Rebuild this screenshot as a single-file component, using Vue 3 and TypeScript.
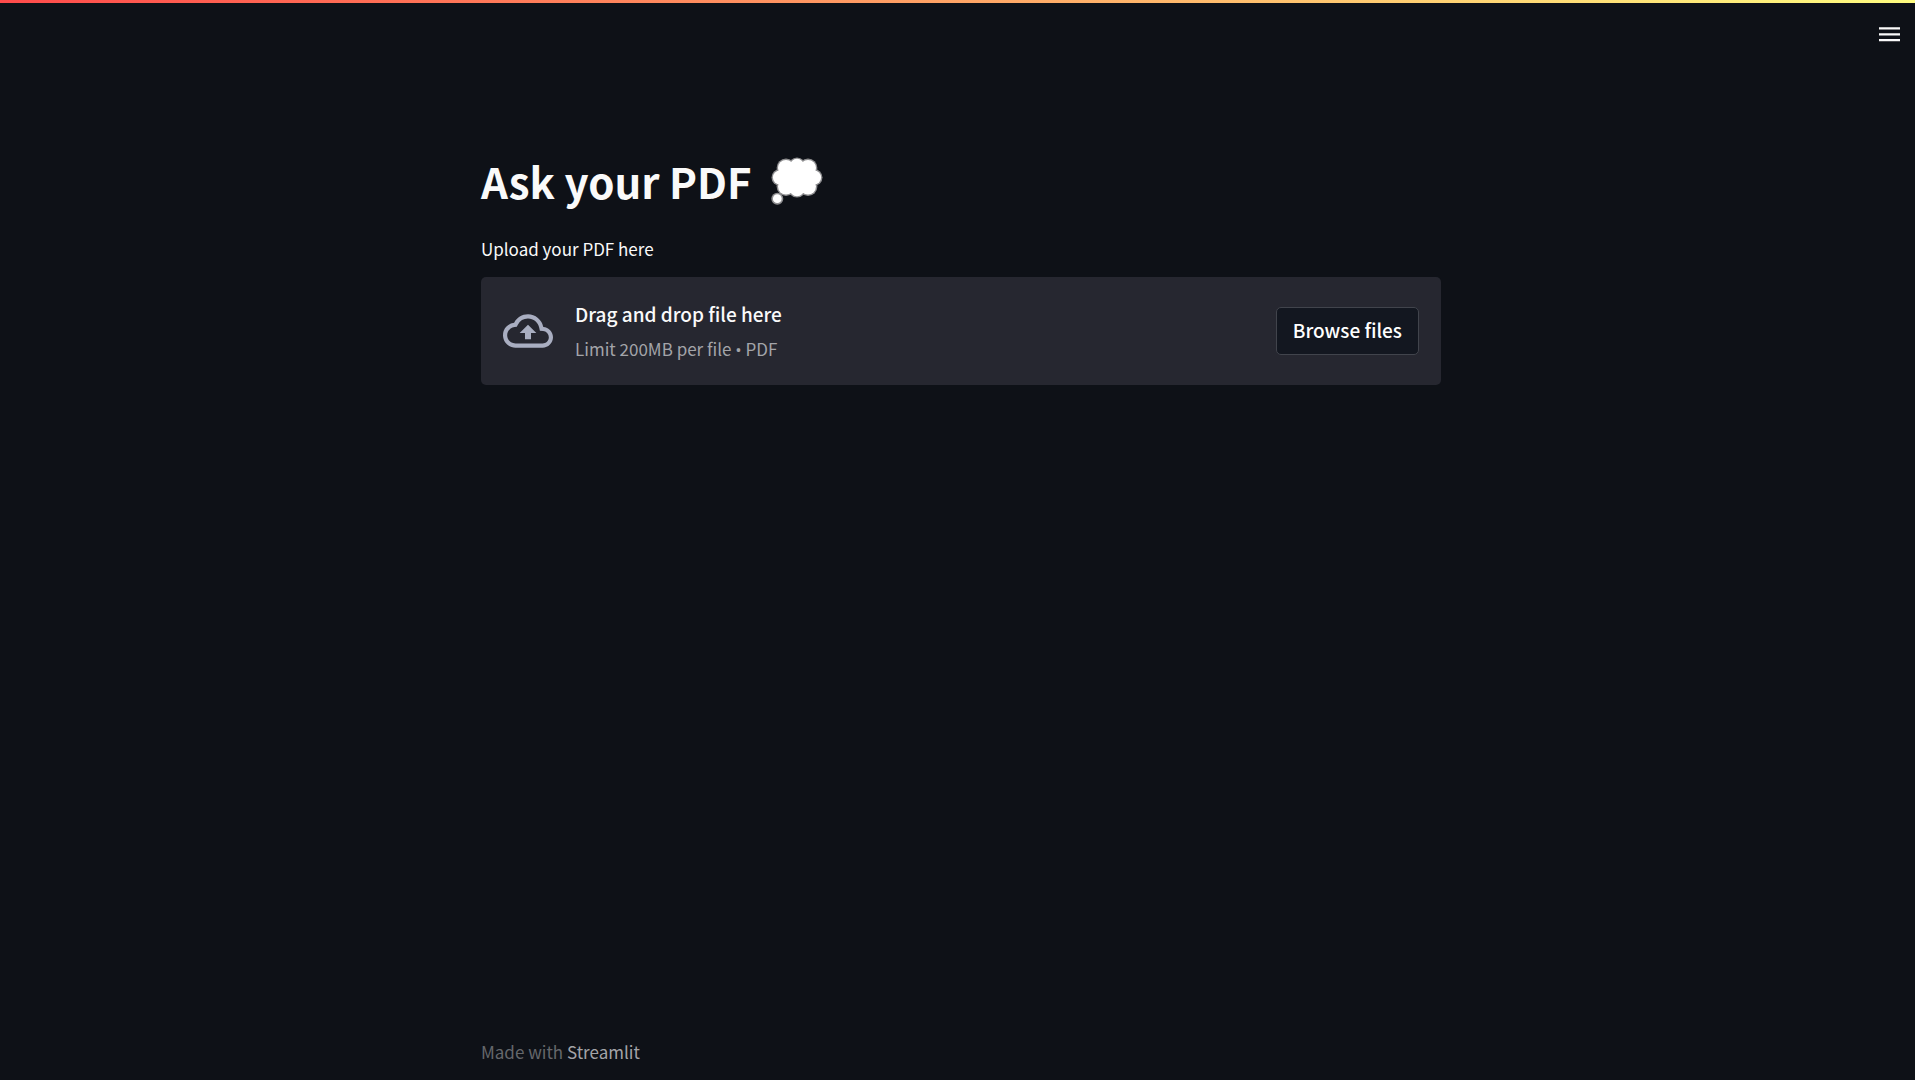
<script setup lang="ts">
import { ref } from 'vue'

interface Puff {
  x: number
  y: number
  r: number
}

const puffs: Puff[] = [
  { x: 26, y: 9, r: 8.6 },
  { x: 15, y: 11, r: 9.4 },
  { x: 37, y: 11, r: 9.4 },
  { x: 9, y: 20.5, r: 8.5 },
  { x: 43, y: 20.5, r: 8.5 },
  { x: 15, y: 29.5, r: 9.4 },
  { x: 37, y: 29.5, r: 9.4 },
  { x: 26, y: 31.8, r: 8.8 },
]

const picker = ref<HTMLInputElement | null>(null)
const openPicker = () => picker.value?.click()
</script>

<template>
  <div class="app">
    <header class="topbar">
      <button class="menu" type="button" aria-label="Main menu">
        <svg viewBox="0 0 21 15" fill="currentColor" aria-hidden="true">
          <path d="M0 .3h21v2.3H0zM0 6.2h21v2.3H0zM0 12h21v2.3H0z" />
        </svg>
      </button>
    </header>

    <div class="page">
      <main class="content">
        <h1 class="title">
          <span>Ask your PDF</span>
          <svg class="thought" viewBox="0 0 52 48" role="img" aria-label="Thought balloon">
            <g fill="#8e8e90">
              <circle v-for="(p, i) in puffs" :key="i" :cx="p.x" :cy="p.y" :r="p.r" />
              <circle cx="6.3" cy="41.7" r="6" />
            </g>
            <g fill="#ffffff">
              <circle v-for="(p, i) in puffs" :key="i" :cx="p.x" :cy="p.y" :r="p.r - 1.4" />
              <rect x="9" y="9" width="34" height="23" />
              <circle cx="6.3" cy="41.7" r="4.4" />
            </g>
          </svg>
        </h1>

        <label class="label" for="pdf-file">Upload your PDF here</label>
        <section class="dropzone">
          <svg class="cloud" viewBox="0 0 24 24" fill="currentColor" aria-hidden="true">
            <path
              d="M19.35 10.04A7.49 7.49 0 0 0 12 4C9.11 4 6.6 5.64 5.35 8.04A5.994 5.994 0 0 0 0 14c0 3.31 2.69 6 6 6h13c2.76 0 5-2.24 5-5 0-2.64-2.05-4.78-4.65-4.96zM19 18H6c-2.21 0-4-1.79-4-4 0-2.05 1.53-3.76 3.56-3.97l1.07-.11.5-.95A5.469 5.469 0 0 1 12 6c2.62 0 4.88 1.86 5.39 4.43l.3 1.5 1.53.11A2.98 2.98 0 0 1 22 15c0 1.65-1.35 3-3 3zM8 13h2.55v3h2.9v-3H16l-4-4z"
            />
          </svg>
          <div class="hints">
            <span class="primary">Drag and drop file here</span>
            <span class="secondary">Limit 200MB per file <span class="bullet">•</span> PDF</span>
          </div>
          <input id="pdf-file" ref="picker" type="file" accept=".pdf" hidden />
          <button class="browse" type="button" @click="openPicker">Browse files</button>
        </section>
      </main>

      <footer class="footer">Made with <a href="#">Streamlit</a></footer>
    </div>
  </div>
</template>

<style>
body {
  background: #0e1117;
}
</style>

<style scoped>
.app {
  display: flex;
  flex-direction: column;
  min-height: 100vh;
  background: #0e1117;
  color: #fafafa;
  font-family: "Noto Sans CJK SC", "Noto Sans", sans-serif;
  font-size: 17px;
  line-height: 24px;
}

.topbar {
  display: flex;
  justify-content: flex-end;
  align-items: flex-start;
  box-sizing: border-box;
  height: 64px;
  padding: 24px 11px 0 0;
  background: linear-gradient(90deg, #ff4b4b, #fffd80) top / 100% 3px no-repeat;
}

.menu {
  padding: 3px 4px;
  border: 0;
  background: none;
  color: #fafafa;
  cursor: pointer;
}

.menu svg {
  display: block;
  width: 21px;
  height: 15px;
}

.page {
  display: flex;
  flex: 1;
  flex-direction: column;
  align-items: center;
  padding-left: 7px;
}

.content,
.footer {
  width: 100%;
  max-width: 960px;
}

.content {
  flex: 1;
  padding-top: 87px;
}

.title {
  display: flex;
  align-items: center;
  gap: 19px;
  margin: 0 0 26px;
  font-size: 42px;
  font-weight: 700;
  line-height: 60px;
}

.thought {
  width: 52px;
  height: 48px;
}

.label {
  display: block;
  margin-bottom: 16px;
}

.dropzone {
  display: flex;
  align-items: center;
  gap: 22px;
  box-sizing: border-box;
  min-height: 108px;
  padding: 20px 22px;
  border-radius: 5px;
  background: #262730;
}

.cloud {
  flex: none;
  width: 50px;
  height: 50px;
  color: #a9aec1;
}

.hints {
  display: flex;
  flex: 1;
  flex-direction: column;
  gap: 9px;
}

.primary {
  font-size: 19px;
  font-weight: 500;
  line-height: 28px;
}

.secondary {
  color: #a3a4a9;
}

.bullet {
  font-family: "Open Sans", sans-serif;
}

.browse {
  box-sizing: border-box;
  height: 48px;
  padding: 0 16px 2px;
  border: 1px solid #41444c;
  border-radius: 5px;
  background: #131720;
  color: #ffffff;
  font: inherit;
  font-size: 19px;
  font-weight: 500;
  cursor: pointer;
}

.footer {
  padding-bottom: 16px;
  color: #65676b;
}

.footer a {
  color: #a3a4a8;
  text-decoration: none;
}
</style>
